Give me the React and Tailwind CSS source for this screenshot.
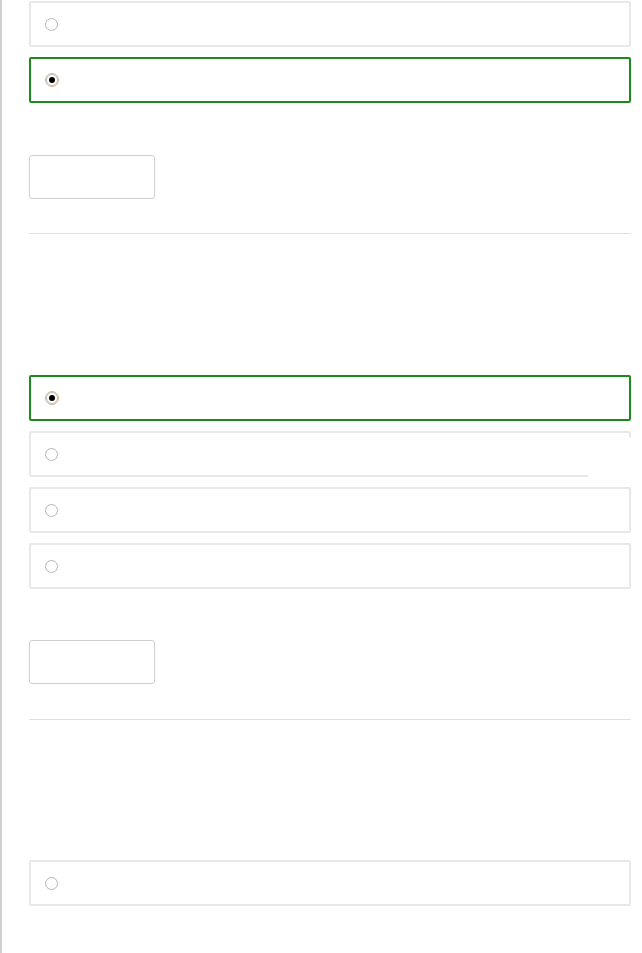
import React from "react";

function Radio({ checked }) {
  if (checked) {
    return (
      <span className="flex h-[14px] w-[14px] items-center justify-center rounded-full border border-[#d8b48c] bg-white">
        <span className="flex h-[12px] w-[12px] items-center justify-center rounded-full border border-[#bdbdbd] bg-white">
          <span className="h-[6px] w-[6px] rounded-full bg-black" />
        </span>
      </span>
    );
  }
  return <span className="h-[13px] w-[13px] rounded-full border border-[#b5b5b5] bg-white" />;
}

function Option({ checked }) {
  return (
    <div
      className={
        "flex h-[46px] items-center rounded-[2px] border-2 pl-[14px] " +
        (checked ? "border-[#1e8a1e]" : "border-[#e8e8e8]")
      }
    >
      <Radio checked={checked} />
    </div>
  );
}

function Button() {
  return <div className="h-[44px] w-[126px] rounded-[3px] border border-[#cfcfcf] bg-white" />;
}

export default function App() {
  return (
    <div
      className="relative min-h-[953px] w-[642px] overflow-hidden border-l-2 border-[#d0d0d0] bg-white"
      style={{ fontFamily: '"Liberation Sans", Arial, sans-serif' }}
    >
      <div className="flex flex-col pl-[27px] pr-[11px] pt-px">
        <div className="flex flex-col gap-[10px]">
          <Option />
          <Option checked />
        </div>
        <div className="mt-[52px]">
          <Button />
        </div>
        <div className="mt-[34px] h-px bg-[#e0e0e0]" />
        <div className="mt-[141px] flex flex-col gap-[10px]">
          <Option checked />
          <Option />
          <Option />
          <Option />
        </div>
        <div className="mt-[51px]">
          <Button />
        </div>
        <div className="mt-[35px] h-px bg-[#e0e0e0]" />
        <div className="mt-[140px] flex flex-col gap-[10px]">
          <Option />
        </div>
      </div>
      <div className="absolute left-[586px] top-[437px] h-[50px] w-[60px] rounded-[10px] bg-white" />
    </div>
  );
}
